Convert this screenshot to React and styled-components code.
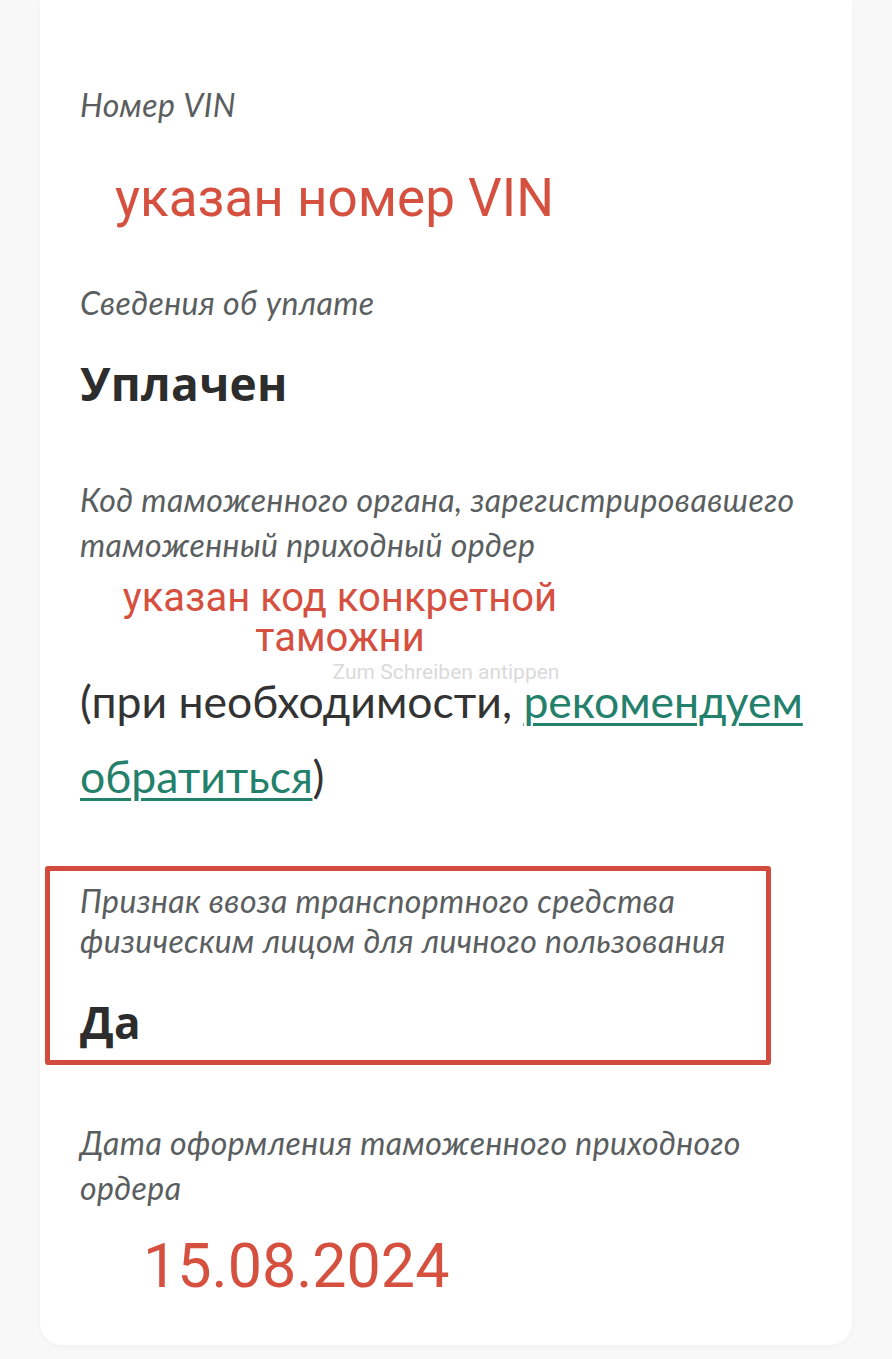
import React from "react";
import styled, { createGlobalStyle } from "styled-components";

const GlobalStyle = createGlobalStyle`
  * {
    box-sizing: border-box;
  }
  body {
    margin: 0;
    background-color: #f8f8f8;
    font-family: "Lato", "Noto Sans", sans-serif;
  }
`;

const Page = styled.div`
  width: 892px;
  min-height: 1359px;
  padding: 0 40px 17px;
  background-color: #f8f8f8;
`;

const Card = styled.div`
  width: 100%;
  background-color: white;
  border-radius: 0 0 22px 22px;
  padding: 82px 40px 44px;
  box-shadow: 0 2px 6px rgba(0, 0, 0, 0.03);
`;

const Label = styled.p`
  margin: ${props => props.gap || 0}px 0 0;
  font-family: "Lato", "Noto Sans", sans-serif;
  font-style: italic;
  font-size: 32px;
  letter-spacing: 0.4px;
  line-height: ${props => (props.tight ? 40 : 45)}px;
  color: #5a5e5f;
`;

const Value = styled.p`
  margin: ${props => props.gap || 0}px 0 0;
  font-family: "Open Sans", "Noto Sans", sans-serif;
  font-weight: 700;
  font-size: ${props => props.size || 46}px;
  letter-spacing: 0.3px;
  line-height: ${props => (props.size || 46) + 8}px;
  color: #2d2d2d;
`;

const Annotation = styled.p`
  margin: ${props => props.gap || 0}px 0 0;
  padding-left: ${props => props.indent || 0}px;
  width: ${props => (props.width ? props.width + "px" : "auto")};
  text-align: ${props => (props.width ? "center" : "left")};
  font-family: "Roboto", sans-serif;
  font-size: ${props => props.size}px;
  line-height: ${props => props.lh}px;
  color: #d6503f;
`;

const Note = styled.p`
  position: relative;
  margin: 5px 0 0;
  font-family: "Lato", "Noto Sans", sans-serif;
  font-size: 44.5px;
  line-height: 75px;
  color: #333;
`;

const Link = styled.a`
  color: #23806b;
  text-decoration: underline;
  text-decoration-thickness: 3px;
  text-underline-offset: 5px;
`;

// "tap to write" overlay that floats over the paragraph
const Hint = styled.span`
  position: absolute;
  top: -3px;
  left: 0;
  right: 0;
  text-align: center;
  font-family: "Roboto", sans-serif;
  font-size: 21px;
  line-height: 24px;
  color: #dadada;
  pointer-events: none;
`;

const Highlight = styled.div`
  width: 726px;
  margin: 53px 0 0 -35px;
  padding: 10px 30px 12px;
  border: 5px solid #d24b3e;
  border-radius: 3px;
`;

export default function App() {
  return (
    <>
      <GlobalStyle />
      <Page>
        <Card>
          <Label>Номер VIN</Label>
          <Annotation gap={39} indent={35} size={53} lh={64}>
            указан номер VIN
          </Annotation>

          <Label gap={50}>Сведения об уплате</Label>
          <Value gap={31}>Уплачен</Value>

          <Label gap={67}>
            Код таможенного органа, зарегистрировавшего таможенный приходный
            ордер
          </Label>
          <Annotation gap={11} width={520} size={40} lh={40}>
            указан код конкретной
            <br />
            таможни
          </Annotation>

          <Note>
            <Hint>Zum Schreiben antippen</Hint>
            (при необходимости, <Link href="#">рекомендуем обратиться</Link>)
          </Note>

          <Highlight>
            <Label tight>
              Признак ввоза транспортного средства физическим лицом для
              личного пользования
            </Label>
            <Value gap={35} size={44}>
              Да
            </Value>
          </Highlight>

          <Label gap={55}>Дата оформления таможенного приходного ордера</Label>
          <Annotation gap={21} indent={63} size={61} lh={70}>
            15.08.2024
          </Annotation>
        </Card>
      </Page>
    </>
  );
}
